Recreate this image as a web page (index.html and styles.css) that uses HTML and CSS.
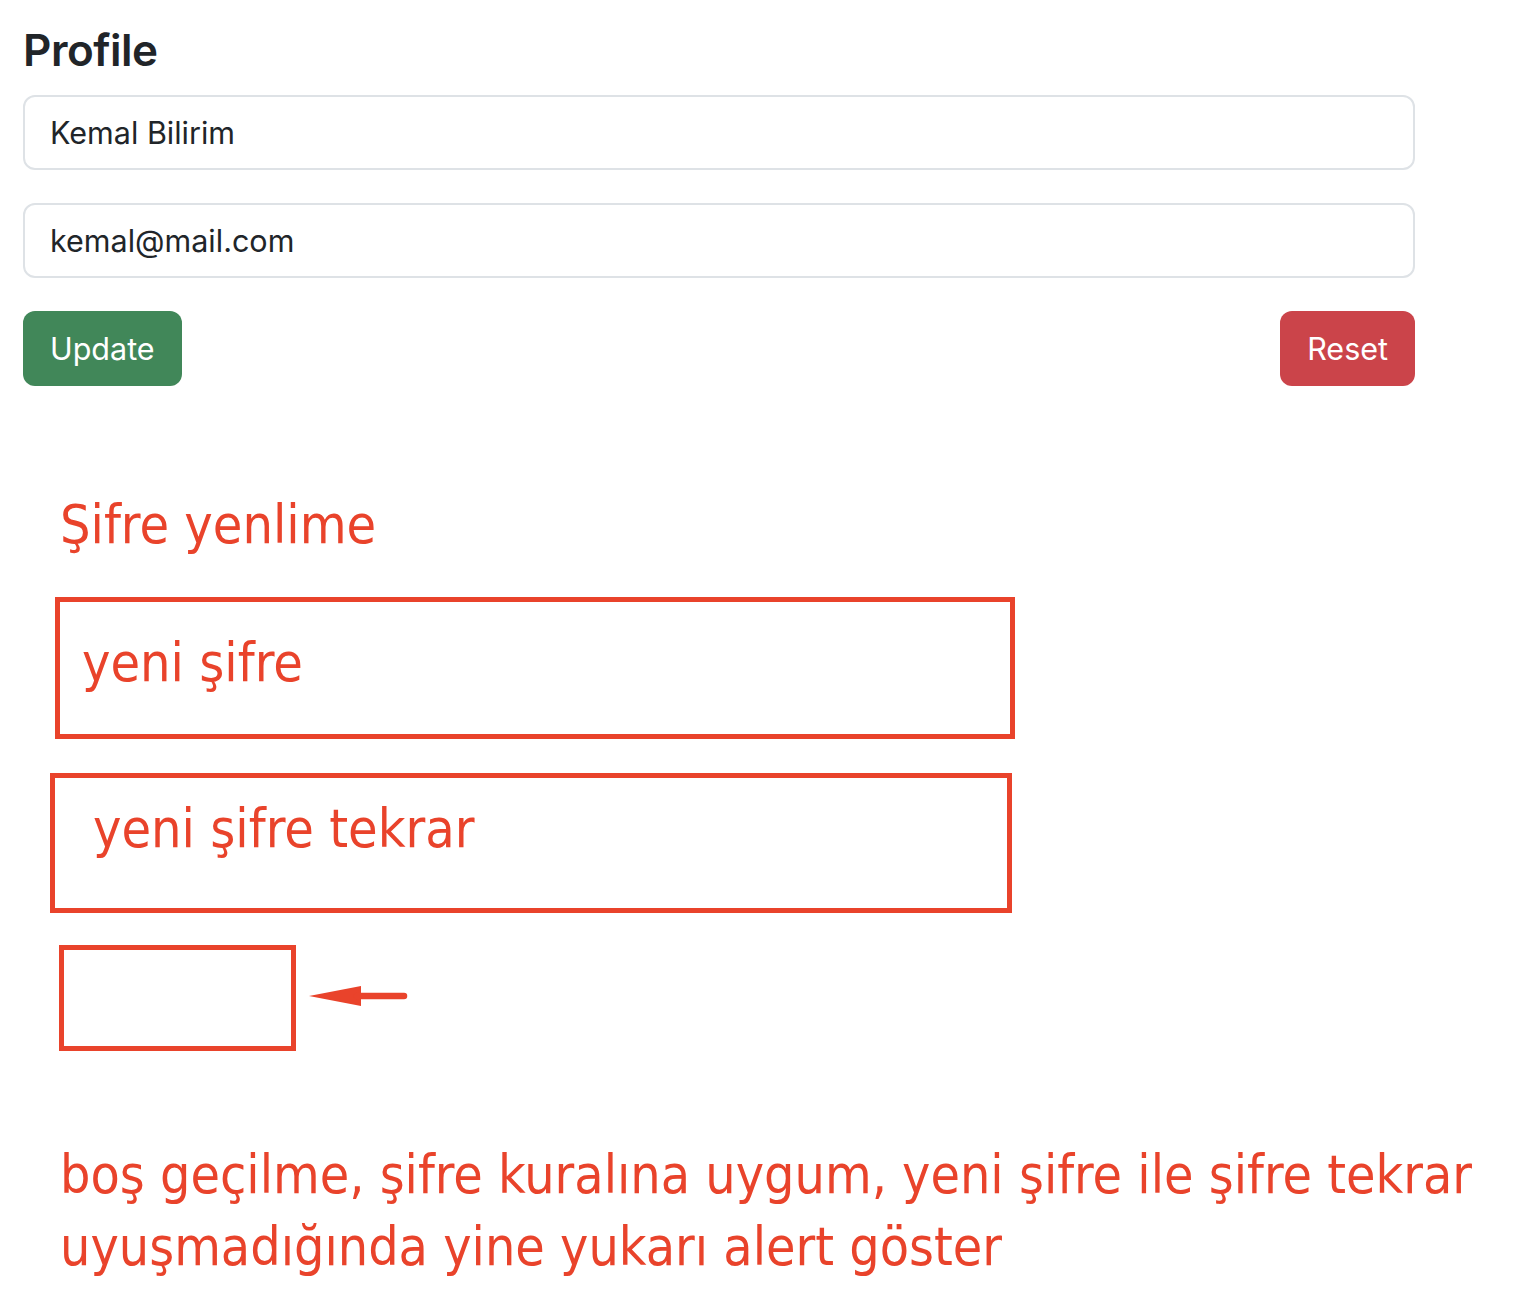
FILE: index.html
```html
<!DOCTYPE html>
<html lang="tr">
<head>
<meta charset="utf-8">
<title>Profile</title>
<link rel="stylesheet" href="styles.css">
</head>
<body>
<main class="page">
  <section class="profile">
    <h1 class="title">Profile</h1>
    <div class="field">Kemal Bilirim</div>
    <div class="field">kemal@mail.com</div>
    <div class="actions">
      <button class="btn btn-success">Update</button>
      <button class="btn btn-danger">Reset</button>
    </div>
  </section>

  <section class="notes">
    <h2 class="note-title">Şifre yenlime</h2>
    <div class="note-box note-box-1">yeni şifre</div>
    <div class="note-box note-box-2">yeni şifre tekrar</div>
    <div class="note-row">
      <div class="note-box note-box-3"></div>
      <svg class="arrow" width="100" height="22" viewBox="0 0 100 22" aria-hidden="true">
        <polygon points="0,11 52,1 52,21" fill="#e9432b"/>
        <line x1="48" y1="11" x2="95" y2="11" stroke="#e9432b" stroke-width="6.5" stroke-linecap="round"/>
      </svg>
    </div>
    <p class="note-text">boş geçilme, şifre kuralına uygum, yeni şifre ile şifre tekrar<br>uyuşmadığında yine yukarı alert göster</p>
  </section>
</main>
</body>
</html>
```

FILE: styles.css
```css
html, body {
  margin: 0;
  padding: 0;
  background: #ffffff;
}

.page {
  padding: 0;
}

.profile {
  width: 1392px;
  margin-left: 23px;
  font-family: Inter, "Liberation Sans", sans-serif;
  color: #212529;
}

.title {
  margin: 0;
  padding-top: 22px;
  font-size: 44px;
  line-height: 56px;
  font-weight: 600;
  letter-spacing: -0.5px;
  margin-bottom: 17px;
}

.field {
  box-sizing: border-box;
  height: 75px;
  border: 2px solid #dee2e6;
  border-radius: 12px;
  padding: 0 25px;
  display: flex;
  align-items: center;
  font-size: 30.5px;
  color: #212529;
  margin-bottom: 33px;
}

.actions {
  display: flex;
  justify-content: space-between;
}

.btn {
  box-sizing: border-box;
  height: 75px;
  border: none;
  border-radius: 12px;
  padding: 0 27px;
  font-family: Inter, "Liberation Sans", sans-serif;
  font-size: 30.5px;
  color: #ffffff;
}

.btn-success {
  background: #418759;
}

.btn-danger {
  background: #cb444a;
}

.notes {
  font-family: "DejaVu Sans Condensed", "DejaVu Sans", sans-serif;
  color: #e9432b;
  padding-top: 109px;
}

.note-title {
  margin: 0 0 0 60px;
  font-size: 53.5px;
  line-height: 60px;
  font-weight: normal;
  margin-bottom: 42px;
}

.note-box {
  box-sizing: border-box;
  border: 5px solid #e9432b;
  font-size: 53.5px;
  line-height: 60px;
}

.note-box-1 {
  margin-left: 55px;
  width: 960px;
  height: 142px;
  padding: 31px 0 0 22px;
  margin-bottom: 34px;
}

.note-box-2 {
  margin-left: 50px;
  width: 962px;
  height: 140px;
  padding: 21px 0 0 38px;
  margin-bottom: 32px;
}

.note-row {
  display: flex;
  align-items: center;
  margin-left: 59px;
}

.note-box-3 {
  width: 237px;
  height: 106px;
}

.arrow {
  margin-left: 13px;
  margin-top: -4px;
}

.note-text {
  margin: 88px 0 0 60px;
  font-size: 53.3px;
  line-height: 72px;
  white-space: nowrap;
}
```
